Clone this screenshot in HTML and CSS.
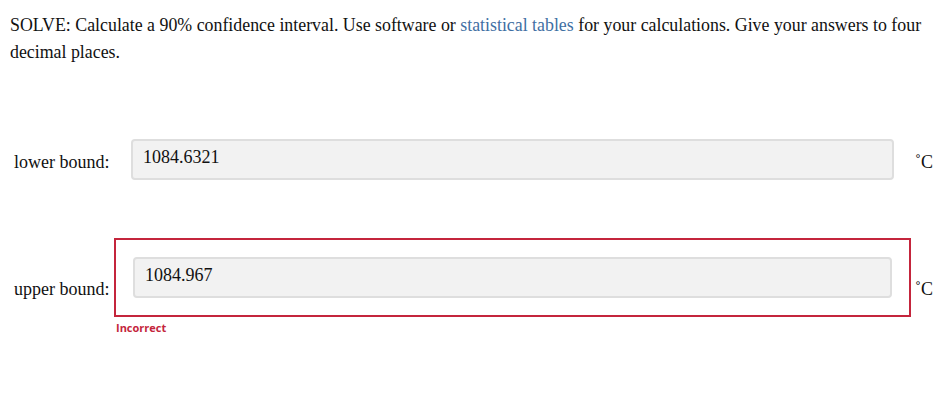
FILE: index.html
```html
<!DOCTYPE html>
<html lang="en">
<head>
  <meta charset="UTF-8" />
  <title>Confidence interval</title>
  <link rel="stylesheet" href="styles.css">
</head>
<body>
  <p class="prompt">
    SOLVE: Calculate a 90% confidence interval. Use software or
    <a href="#">statistical tables</a> for your calculations. Give your answers to four decimal places.
  </p>

  <div class="answers">
    <div class="row">
      <label class="label" for="lower">lower bound:</label>
      <div class="field">
        <div class="box">
          <input id="lower" class="answer" type="text" value="1084.6321" />
        </div>
      </div>
      <span class="unit">˚C</span>
    </div>

    <div class="row">
      <label class="label" for="upper">upper bound:</label>
      <div class="field">
        <div class="box wrong">
          <input id="upper" class="answer" type="text" value="1084.967" />
        </div>
        <div class="feedback">Incorrect</div>
      </div>
      <span class="unit">˚C</span>
    </div>
  </div>
</body>
</html>
```

FILE: styles.css
```css
body {
  margin: 0;
  padding: 0 10px;
  background: #ffffff;
  color: #111;
  font-family: "Liberation Serif", "Times New Roman", serif;
  font-size: 18px;
}

.prompt {
  margin: 12px 0 0;
  font-size: 17.85px;
  line-height: 27px;
}

.prompt a {
  color: #3f6fa3;
  text-decoration: none;
}

.answers {
  margin-top: 56px;
  display: flex;
  flex-direction: column;
  gap: 41px;
}

.row {
  display: flex;
  align-items: center;
}

.label {
  width: 104px;
  padding: 6px 0 0 4px;
  box-sizing: border-box;
  flex-shrink: 0;
}

.field {
  flex: 1;
}

.box {
  padding: 17px;
  border: 2px solid transparent;
  margin: -2px;
}

.box.wrong {
  margin: 0;
  border-color: #c4253c;
}

.answer {
  display: block;
  width: 100%;
  box-sizing: border-box;
  height: 41px;
  padding: 0 10px 4px;
  background: #f2f2f2;
  border: 2px solid #dedede;
  border-radius: 4px;
  font-family: inherit;
  font-size: 18px;
  color: #111;
  outline: none;
}

.feedback {
  margin-top: 3px;
  padding-left: 2px;
  font-family: "Open Sans", "Liberation Sans", sans-serif;
  font-weight: bold;
  font-size: 11px;
  line-height: 15px;
  color: #c4253c;
}

.unit {
  width: 21px;
  margin-left: 4px;
  padding-top: 6px;
  flex-shrink: 0;
}
```
